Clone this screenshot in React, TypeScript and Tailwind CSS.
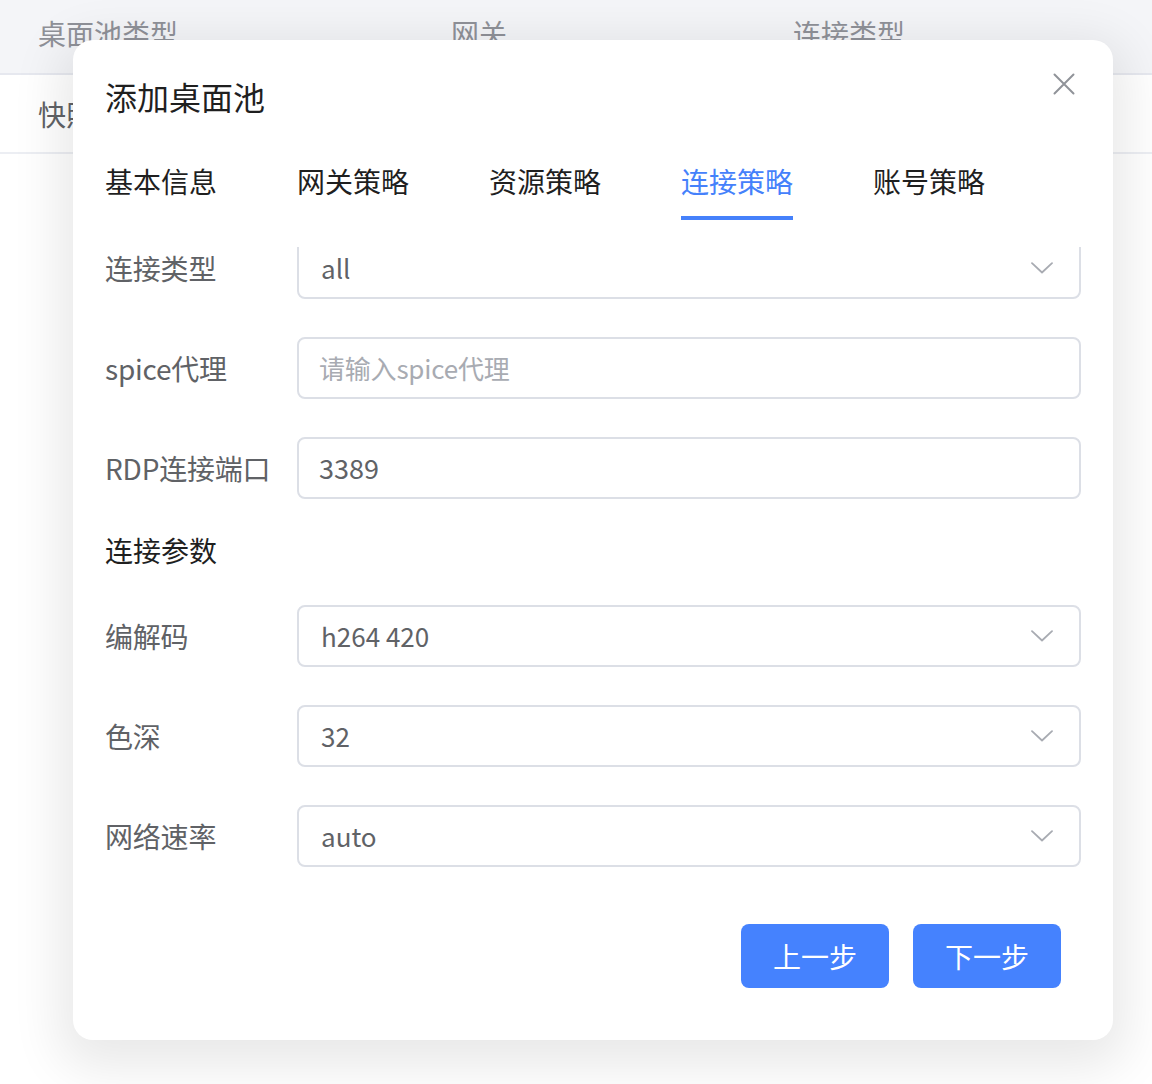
import React from "react";

const font = { fontFamily: '"Noto Sans CJK SC", "Noto Sans", sans-serif' };

function Chevron() {
  return (
    <svg width="22" height="12" viewBox="0 0 22 12" fill="none" className="shrink-0">
      <path d="M1 1.2 L11 10.5 L21 1.2" stroke="#a8abb2" strokeWidth="1.8" strokeLinecap="round" strokeLinejoin="round" />
    </svg>
  );
}

function SelectBox({ value }: { value: string }) {
  return (
    <div className="flex-1 h-[62px] rounded-[8px] border-2 border-[#dcdfe6] flex items-center justify-between pl-[22px] pr-[26px]">
      <span className="text-[26px] leading-[40px] text-[#606266]">{value}</span>
      <Chevron />
    </div>
  );
}

function InputBox({ value, placeholder }: { value?: string; placeholder?: string }) {
  return (
    <div className="flex-1 h-[62px] rounded-[8px] border-2 border-[#dcdfe6] flex items-center pl-[20px] pr-[20px]">
      {value ? (
        <span className="text-[27px] leading-[40px] text-[#606266]">{value}</span>
      ) : (
        <span className="text-[26px] leading-[40px] text-[#a8abb2] tracking-[-0.2px]">{placeholder}</span>
      )}
    </div>
  );
}

function Row({ label, children, className = "" }: { label: string; children: React.ReactNode; className?: string }) {
  return (
    <div className={"flex items-center " + className}>
      <div className="w-[192px] shrink-0 text-[28px] leading-[40px] text-[#606266] whitespace-nowrap tracking-[-0.2px]">{label}</div>
      {children}
    </div>
  );
}

export default function App() {
  const tabs = ["基本信息", "网关策略", "资源策略", "连接策略", "账号策略"];
  return (
    <div className="relative w-[1152px] h-[1084px] overflow-hidden bg-white" style={font}>
      {/* background table */}
      <div className="flex flex-col">
        <div className="h-[75px] bg-[#f4f5f8] border-b-2 border-[#e6e8ef] flex items-center text-[28px] text-[#8f9198]">
          <span className="pl-[38px] w-[451px] -mt-[8px]">桌面池类型</span>
          <span className="w-[342px] -mt-[8px]">网关</span>
          <span className="-mt-[8px]">连接类型</span>
        </div>
        <div className="h-[79px] border-b-2 border-[#eceef3] flex items-center text-[28px] text-[#606266]">
          <span className="pl-[38px]">快照</span>
        </div>
      </div>

      {/* modal */}
      <div className="absolute left-[73px] top-[40px] w-[1040px] h-[1000px] rounded-[20px] bg-white shadow-[0_14px_50px_14px_rgba(0,0,0,0.09)] flex flex-col">
        <div className="px-[32px] pt-[32px]">
          <div className="text-[32px] leading-[48px] text-[#1f1f1f]">添加桌面池</div>
        </div>
        <button className="absolute right-[38px] top-[33px] w-[22px] h-[22px] flex items-center justify-center">
          <svg width="22" height="22" viewBox="0 0 22 22" fill="none">
            <path d="M1.5 1.5 L20.5 20.5 M20.5 1.5 L1.5 20.5" stroke="#909399" strokeWidth="2" strokeLinecap="round" />
          </svg>
        </button>

        {/* tabs */}
        <div className="flex gap-[80px] px-[32px] mt-[41px]">
          {tabs.map((t, i) => (
            <div key={t} className="flex flex-col items-stretch">
              <span className={"text-[28px] leading-[40px] whitespace-nowrap " + (i === 3 ? "text-[#4581fb]" : "text-[#1f1f1f]")}>{t}</span>
              <div className={"mt-[15px] h-[4px] " + (i === 3 ? "bg-[#4581fb]" : "bg-transparent")} />
            </div>
          ))}
        </div>

        {/* scroll body */}
        <div className="mt-[27px] h-[643px] overflow-hidden px-[32px]">
          <div className="-mt-[10px] flex flex-col">
            <Row label="连接类型">
              <SelectBox value="all" />
            </Row>
            <Row label="spice代理" className="mt-[38px]">
              <InputBox placeholder="请输入spice代理" />
            </Row>
            <Row label="RDP连接端口" className="mt-[38px]">
              <InputBox value="3389" />
            </Row>
            <div className="mt-[31px] text-[28px] leading-[40px] text-[#1f1f1f]">连接参数</div>
            <Row label="编解码" className="mt-[35px]">
              <SelectBox value="h264 420" />
            </Row>
            <Row label="色深" className="mt-[38px]">
              <SelectBox value="32" />
            </Row>
            <Row label="网络速率" className="mt-[38px]">
              <SelectBox value="auto" />
            </Row>
          </div>
        </div>

        {/* footer */}
        <div className="mt-[34px] flex justify-end gap-[24px] pr-[52px]">
          <button className="w-[148px] h-[64px] rounded-[8px] bg-[#4582fe] text-white text-[28px] leading-[40px]">上一步</button>
          <button className="w-[148px] h-[64px] rounded-[8px] bg-[#4582fe] text-white text-[28px] leading-[40px]">下一步</button>
        </div>
      </div>
    </div>
  );
}
